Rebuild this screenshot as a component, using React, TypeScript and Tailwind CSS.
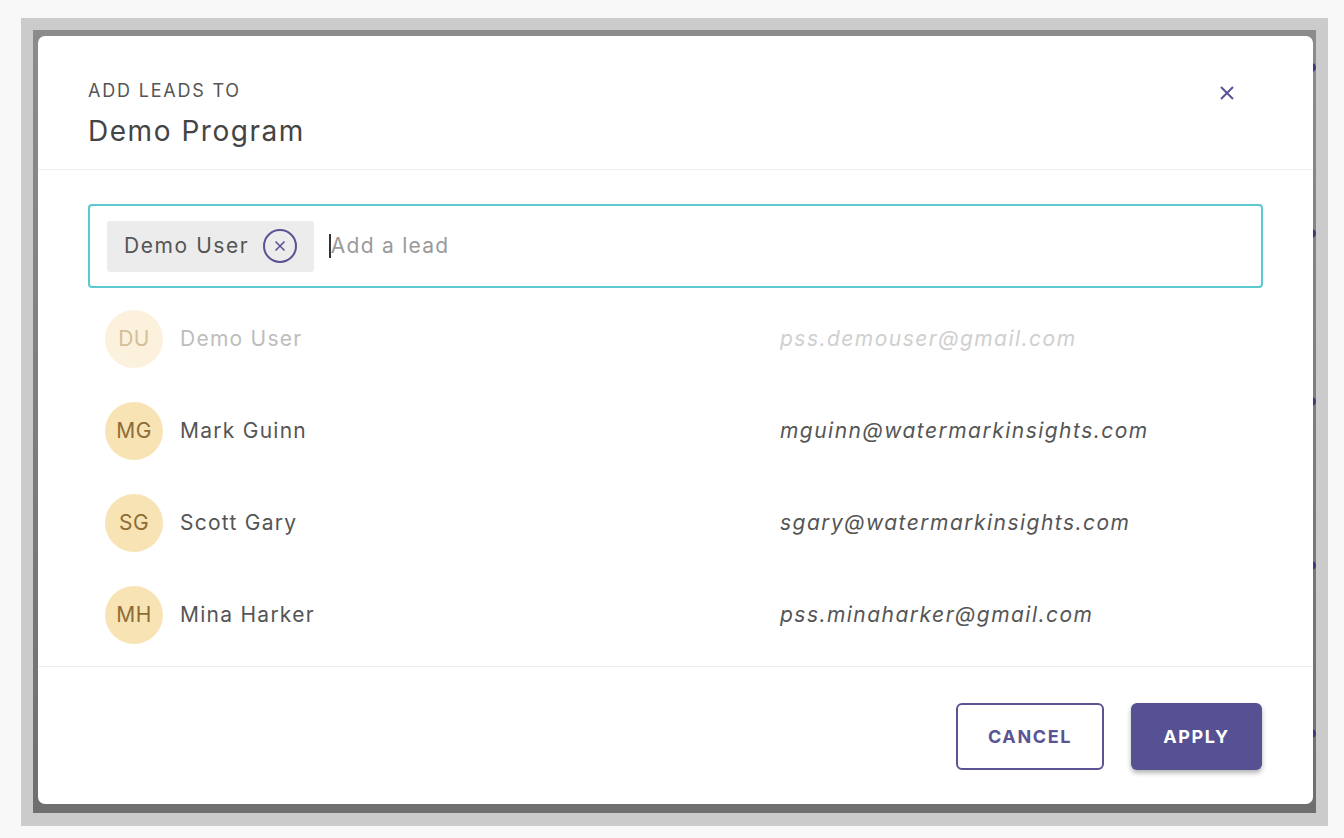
import React from "react";

const rows = [
  { i: "DU", name: "Demo User", email: "pss.demouser@gmail.com", faded: true },
  { i: "MG", name: "Mark Guinn", email: "mguinn@watermarkinsights.com" },
  { i: "SG", name: "Scott Gary", email: "sgary@watermarkinsights.com" },
  { i: "MH", name: "Mina Harker", email: "pss.minaharker@gmail.com" },
];

export default function App() {
  return (
    <div
      className="w-[1344px] h-[838px] bg-[#f8f8f8] pt-[18px] pl-[21px]"
      style={{ fontFamily: "Inter, 'Noto Sans', sans-serif" }}
    >
      <div className="w-[1307px] h-[808px] bg-[#cbcbcb] pt-[12px] pl-[12px]">
        <div className="relative w-[1283px] h-[783px] bg-gradient-to-b from-[#8c8c8c] to-[#6f6f6f] pt-[6px] pl-[5px]">
          {[33, 199, 367, 531, 699].map((t) => (
            <span
              key={t}
              className="absolute left-[1277px] w-[6px] h-[9px] rounded-r-full bg-[#3d3a78]"
              style={{ top: t }}
            />
          ))}
          <div className="relative w-[1275px] h-[768px] bg-white rounded-[7px] flex flex-col">
            {/* header */}
            <div className="h-[134px] border-b border-[#f0f0f0] pl-[50px] pr-[78px] flex justify-between">
              <div className="pt-[44px]">
                <div className="text-[18px] leading-[22px] tracking-[0.1em] text-[#555555] uppercase">
                  Add leads to
                </div>
                <div className="mt-[12px] text-[28px] leading-[34px] tracking-[0.055em] text-[#444444]">
                  Demo Program
                </div>
              </div>
              <button className="mt-[49px] w-[16px] h-[16px] text-[#5a5494]">
                <svg viewBox="0 0 16 16" className="w-[16px] h-[16px]" fill="none" stroke="currentColor" strokeWidth="2">
                  <path d="M2 2 L14 14 M14 2 L2 14" />
                </svg>
              </button>
            </div>
            {/* body */}
            <div className="flex-1 px-[50px] pt-[34px] border-b border-[#ececec]">
              <div className="h-[84px] border-2 border-[#5cc9d1] rounded-[4px] flex items-center pl-[17px]">
                <div className="h-[51px] bg-[#ececec] rounded-[3px] flex items-center pl-[17px] pr-[17px]">
                  <span className="text-[21px] tracking-[0.075em] text-[#555555]">Demo User</span>
                  <span className="ml-[14px] w-[34px] h-[34px] rounded-full border-2 border-[#5a5494] flex items-center justify-center text-[#5a5494]">
                    <svg viewBox="0 0 12 12" className="w-[12px] h-[12px]" fill="none" stroke="currentColor" strokeWidth="1.6">
                      <path d="M1.5 1.5 L10.5 10.5 M10.5 1.5 L1.5 10.5" />
                    </svg>
                  </span>
                </div>
                <span className="ml-[15px] w-[1.5px] h-[24px] bg-[#333333]" />
                <span className="text-[21px] tracking-[0.06em] text-[#9a9a9a]">Add a lead</span>
              </div>
              <div className="pt-[5px]">
                {rows.map((r) => (
                  <div key={r.i} className="h-[92px] flex items-center pl-[17px]">
                    <div
                      className={`w-[58px] h-[58px] rounded-full flex items-center justify-center text-[21px] tracking-[0.02em] ${
                        r.faded ? "bg-[#fcf1dc] text-[#d3bf98]" : "bg-[#f8e3b4] text-[#8c6c34]"
                      }`}
                    >
                      {r.i}
                    </div>
                    <div
                      className={`ml-[17px] w-[600px] text-[21px] tracking-[0.06em] ${
                        r.faded ? "text-[#bdbdbd]" : "text-[#555555]"
                      }`}
                    >
                      {r.name}
                    </div>
                    <div
                      className={`italic text-[21px] tracking-[0.07em] ${r.faded ? "text-[#cfcfcf]" : "text-[#555555]"}`}
                    >
                      {r.email}
                    </div>
                  </div>
                ))}
              </div>
            </div>
            {/* footer */}
            <div className="h-[137px] flex items-start pt-[36px] justify-end pr-[51px] gap-[27px]">
              <button className="w-[148px] h-[67px] rounded-[6px] border-2 border-[#5a5494] text-[#5a5494] font-bold text-[18px] tracking-[0.09em]">
                CANCEL
              </button>
              <button className="w-[131px] h-[67px] rounded-[6px] bg-[#565192] text-white font-bold text-[18px] tracking-[0.09em] shadow-[0_3px_5px_rgba(0,0,0,0.3)]">
                APPLY
              </button>
            </div>
          </div>
        </div>
      </div>
    </div>
  );
}
